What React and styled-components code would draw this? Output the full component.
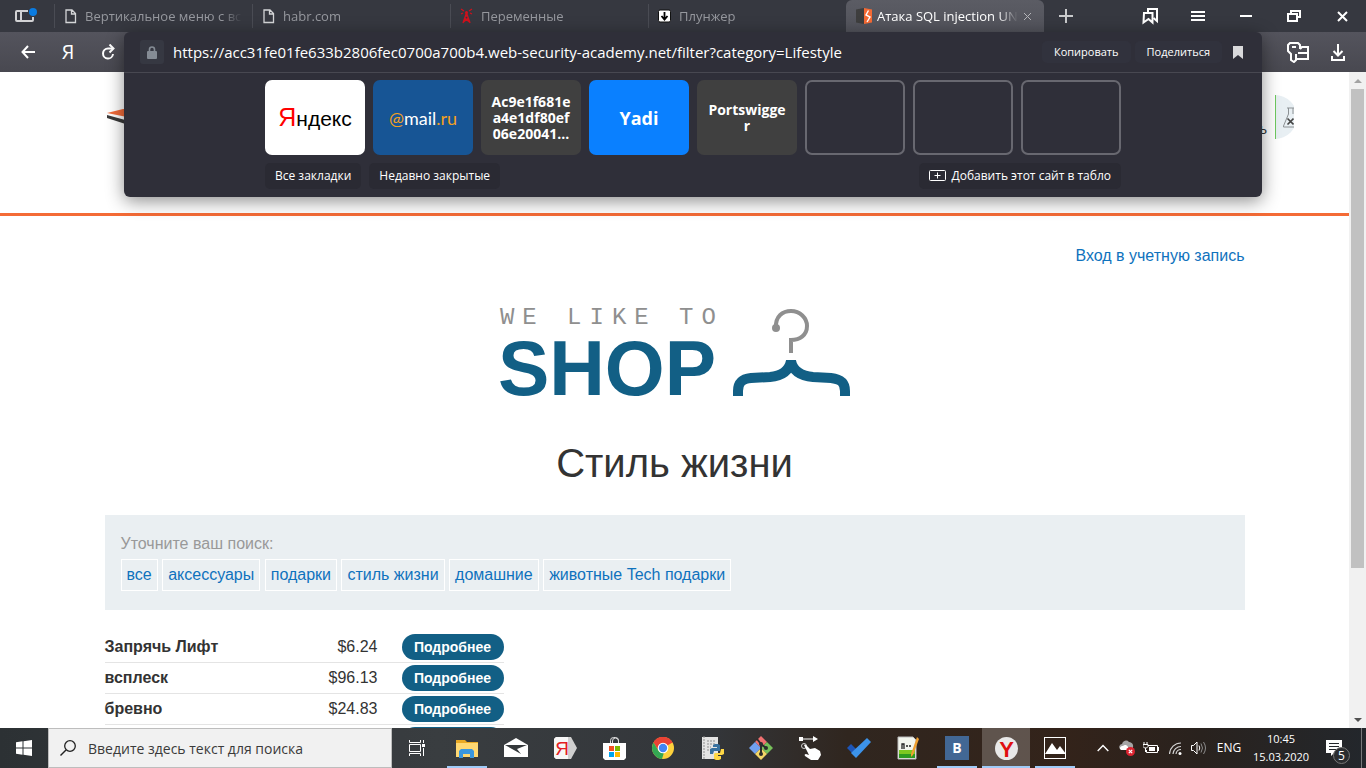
import React, { Fragment } from "react";
import styled, { createGlobalStyle } from "styled-components";

const ui = `"Open Sans", "Noto Sans", sans-serif`;
const site = `"Liberation Sans", Arial, sans-serif`;

const GlobalStyle = createGlobalStyle`
  *, *::before, *::after { box-sizing: border-box; }
  body { margin: 0; background: #fff; }
  button, input { font: inherit; color: inherit; border: 0; background: none; padding: 0; margin: 0; }
  input { outline: none; min-width: 0; }
  svg { display: block; flex: none; }
`;

const Desktop = styled.div`
  display: flex;
  flex-direction: column;
  height: 100vh;
  overflow: hidden;
  font-family: ${ui};
`;

const Browser = styled.div`
  position: relative;
  flex: 1;
  min-height: 0;
  display: flex;
  flex-direction: column;
`;

/* ---------- tab strip ---------- */

const TabStrip = styled.div`
  display: flex;
  height: 32px;
  flex: none;
  background: #363840;
  color: #fff;
`;

const PanelToggle = styled.button`
  width: 54px;
  padding: 0 0 0 15px;
`;

const Tab = styled.button`
  display: flex;
  align-items: center;
  gap: ${(p) => (p.$active ? 5 : 8)}px;
  width: 198px;
  height: 32px;
  padding: 0 ${(p) => (p.$active ? 12 : 10)}px 0 10px;
  text-align: left;
  font-size: 13px;
  line-height: 20px;
  color: ${(p) => (p.$active ? "#fff" : "#96989e")};
  background: ${(p) =>
    p.$active
      ? "linear-gradient(#5b5c64, #52535b)"
      : "linear-gradient(#4a4c54, #4a4c54) 0 4px / 1px 24px no-repeat"};
  border-radius: ${(p) => (p.$active ? "6px 6px 0 0" : "0")};
`;

const TabTitle = styled.span`
  flex: 1;
  min-width: 0;
  overflow: hidden;
  white-space: nowrap;
  mask-image: linear-gradient(to right, #000 calc(100% - 20px), transparent);
`;

const WindowButtons = styled.div`
  display: flex;
  margin-left: auto;
`;

const IconButton = styled.button`
  display: flex;
  align-items: center;
  justify-content: center;
  width: ${(p) => p.$width || 48}px;
  height: 100%;
  color: #fff;
`;

/* ---------- toolbar ---------- */

const Toolbar = styled.div`
  display: flex;
  justify-content: space-between;
  height: 40px;
  flex: none;
  padding: 0 8px;
  background: linear-gradient(#54545d, #484850);
`;

const ToolGroup = styled.div`
  display: flex;
`;

const YaLetter = styled.span`
  font: 20px/24px ${ui};
`;

/* ---------- address panel ---------- */

const AddressPanel = styled.section`
  position: absolute;
  z-index: 2;
  top: 32px;
  left: 124px;
  right: 104px;
  background: #2f2f39;
  border-radius: 6px;
  box-shadow: 0 4px 18px rgba(0, 0, 0, 0.45);
  color: #fff;
`;

const AddressRow = styled.div`
  display: flex;
  align-items: center;
  height: 41px;
  padding: 0 12px 0 16px;
  border-bottom: 1px solid #484851;
`;

const LockButton = styled.button`
  display: flex;
  align-items: center;
  justify-content: center;
  width: 24px;
  height: 24px;
  border-radius: 3px;
  background: #363842;
`;

const AddressInput = styled.input`
  flex: 1;
  padding: 0 9px;
  font-size: 15px;
  line-height: 24px;
`;

const TextButton = styled.button`
  display: flex;
  align-items: center;
  justify-content: center;
  gap: 5px;
  height: ${(p) => (p.$small ? 22 : 26)}px;
  padding: 0 ${(p) => (p.$small ? 12 : 10)}px;
  margin-right: ${(p) => (p.$small ? 4 : 0)}px;
  border-radius: 5px;
  background: ${(p) => (p.$small ? "#31323d" : "#2a2a33")};
  font-size: ${(p) => (p.$small ? 11 : 12)}px;
  line-height: 20px;
  white-space: nowrap;
`;

const Board = styled.div`
  display: flex;
  flex-direction: column;
  gap: 8px;
  width: 856px;
  max-width: 100%;
  margin: 0 auto;
  padding: 7px 0 8px;
`;

const Tiles = styled.div`
  display: grid;
  grid-template-columns: repeat(8, minmax(0, 1fr));
  gap: 8px;
`;

const Tile = styled.button`
  height: 75px;
  padding: 0 10px;
  border-radius: 7px;
  background: ${(p) => p.$bg || "transparent"};
  border: ${(p) => (p.$bg ? "0" : "2px solid #686870")};
  font-size: ${(p) => p.$size || 14}px;
  font-weight: 700;
  line-height: 16px;
  word-break: break-all;
`;

const YandexMark = styled.span`
  font: 21px/32px ${site};
  color: #000;
  white-space: nowrap;
  b {
    font-weight: 400;
    font-size: 25px;
    color: #f00;
  }
`;

const MailMark = styled.span`
  font: 18px/24px Lato, sans-serif;
  color: #fff;
  white-space: nowrap;
  i {
    font-style: normal;
    color: #f2a01f;
  }
`;

const BoardActions = styled.div`
  display: flex;
  gap: 8px;
`;

const Spacer = styled.div`
  flex: 1;
`;

/* ---------- web page ---------- */

const Viewport = styled.div`
  display: flex;
  flex: 1;
  min-height: 0;
`;

const Page = styled.div`
  flex: 1;
  min-width: 0;
  overflow: hidden;
  background: #fff;
  color: #333;
  font: 16px/20px ${site};
`;

const SiteHeader = styled.header`
  height: 144px;
  border-bottom: 3px solid #f46b36;
`;

const HeaderInner = styled.div`
  display: flex;
  align-items: flex-start;
  justify-content: space-between;
  padding: 23px 55px 0 107px;
`;

const SiteLogo = styled.a`
  padding-top: 14px;
`;

const LabStatus = styled.div`
  display: flex;
  align-items: flex-start;
  gap: 8px;
  p {
    margin: 24px 0 0;
    font-size: 14px;
  }
`;

const Container = styled.main`
  max-width: 1140px;
  margin: 0 auto;
  padding-top: 30px;
`;

const Link = styled.a`
  color: #0f72bd;
  text-decoration: none;
`;

const AccountNav = styled.nav`
  text-align: right;
`;

const ShopLogo = styled.div`
  display: flex;
  justify-content: center;
  gap: 16px;
  height: 92px;
  margin-top: 40px;
`;

const ShopSlogan = styled.div`
  width: 216px;
  padding-left: 2px;
  font: 24px/24px "Liberation Mono", monospace;
  letter-spacing: 8px;
  color: #8f8f8f;
  white-space: pre;
`;

const ShopName = styled.div`
  font: 700 77px/76px ${site};
  color: #125f85;
`;

const Title = styled.h1`
  margin: 41px 0 28px;
  font-size: 40px;
  line-height: 48px;
  font-weight: 400;
  text-align: center;
`;

const Filters = styled.section`
  padding: 16px 16px 19px;
  background: #eaeff2;
  p {
    margin: 0 0 2px;
    line-height: 26px;
    color: #999;
  }
`;

const Chips = styled.div`
  line-height: 20px;
`;

const Chip = styled(Link)`
  display: inline-block;
  vertical-align: top;
  padding: 5px;
  border: 1px solid #fff;
`;

const Products = styled.table`
  width: 399px;
  margin-top: 22px;
  border-collapse: separate;
  border-spacing: 0;
  th,
  td {
    height: 31px;
    padding: 2px 0;
    border-bottom: 1px solid #e4e4e4;
    vertical-align: middle;
  }
  th {
    text-align: left;
  }
`;

const Price = styled.td`
  width: 90px;
  text-align: right;
`;

const Action = styled.td`
  width: 126px;
  text-align: right;
`;

const DetailsButton = styled.button`
  display: block;
  width: 102px;
  height: 26px;
  margin-left: auto;
  border-radius: 13px;
  background: #125f85;
  color: #fff;
  font-size: 14px;
  font-weight: 700;
`;

const Scrollbar = styled.div`
  display: flex;
  flex-direction: column;
  align-items: center;
  width: 17px;
  background: #f1f1f1;
`;

const ScrollArrow = styled.button`
  display: flex;
  align-items: center;
  justify-content: center;
  width: 17px;
  height: 17px;
`;

const ScrollTrack = styled.div`
  flex: 1;
  width: 13px;
`;

const ScrollThumb = styled.div`
  height: 77%;
  background: #c1c1c1;
`;

/* ---------- taskbar ---------- */

const Taskbar = styled.footer`
  display: flex;
  height: 40px;
  flex: none;
  color: #fff;
  background: linear-gradient(
    to right,
    #2c3134 0,
    #393d40 32%,
    #33363a 52%,
    #30261f 62%,
    #33231a 78%,
    #29221e 88%,
    #23272c 100%
  );
`;

const SearchBox = styled.label`
  display: flex;
  align-items: center;
  gap: 12px;
  width: 344px;
  padding: 0 11px;
  border: 1px solid #bdbdbd;
  background: #f1f1f1;
  color: #222;
  font-size: 14px;
  input {
    flex: 1;
  }
  input::placeholder {
    color: #3a3a3a;
    opacity: 1;
  }
`;

const Apps = styled.div`
  display: flex;
  gap: 1px;
`;

const AppButton = styled.button`
  display: flex;
  align-items: center;
  justify-content: center;
  width: 48px;
  height: 40px;
  background: ${(p) => (p.$active ? "rgba(255,255,255,0.22)" : "transparent")};
  background-image: ${(p) => (p.$open ? "linear-gradient(#9fcbf8, #9fcbf8)" : "none")};
  background-size: ${(p) => (p.$active ? 48 : 40)}px 2px;
  background-position: center bottom;
  background-repeat: no-repeat;
`;

const Tray = styled.div`
  display: flex;
  margin-left: auto;
  padding-right: 4px;
  font-size: 12px;
  line-height: 18px;
`;

const Clock = styled.button`
  width: 68px;
  text-align: center;
  font-size: 11px;
  white-space: nowrap;
`;

const Notifications = styled(IconButton)`
  padding-top: 8px;
  border-right: 1px solid #77797b;
`;

/* ---------- icons ---------- */

const Svg = ({ w = 16, h = w, children, ...rest }) => (
  <svg width={w} height={h} viewBox={`0 0 ${w} ${h}`} fill="none" aria-hidden="true" {...rest}>
    {children}
  </svg>
);

const line = { stroke: "currentColor", strokeWidth: 2 };

const PanelIcon = () => (
  <Svg w={22} h={16}>
    <path d="M13 3H2q-1 0-1 1v8q0 1 1 1h15q1 0 1-1V9M6 3v10" stroke="#d2d2d4" strokeWidth="2" />
    <circle cx="18" cy="4" r="4" fill="#0a7be0" />
  </Svg>
);
const DocIcon = () => (
  <Svg w={13} h={16}>
    <path d="M2 2h6l3.500 3.500V14.500H2zM7.500 2v4h4" stroke="#d4d5d7" strokeWidth="1.300" />
  </Svg>
);
const TowerIcon = () => (
  <Svg w={13} h={16}>
    <path d="M6.500 5L3 15M6.500 5L10 15M4.500 10L9.500 14M8.500 10L3.500 14M5 8h3" stroke="#d0111c" strokeWidth="1.400" />
    <path d="M1 1l3 2M1 6l2-1M12 1L9 3M12 6l-2-1" stroke="#d0111c" strokeWidth="1.200" />
    <circle cx="6.500" cy="4.500" r="1.500" fill="#d0111c" />
  </Svg>
);
const PlungerIcon = () => (
  <Svg w={13} h={16}>
    <rect x="0.500" y="2" width="12" height="12" rx="1.500" fill="#fff" stroke="#111" />
    <path d="M6.500 4v7M3.500 8l3 3.500 3-3.500" stroke="#000" strokeWidth="1.800" />
  </Svg>
);
const BurpIcon = () => (
  <Svg w={16} h={16}>
    <path d="M0 1.500L8 0v16L0 14.500z" fill="#3e3e3e" />
    <path d="M8 0l8 1.500v13L8 16z" fill="#f56a34" />
    <path d="M12.500 2.500L10 7l4 2-3 5" stroke="#fff" strokeWidth="1.400" />
  </Svg>
);
const CloseIcon = ({ size = 10, color = "#fff", weight = 2 }) => (
  <Svg w={size}>
    <path d={`M1 1L${size - 1} ${size - 1}M${size - 1} 1L1 ${size - 1}`} stroke={color} strokeWidth={weight} />
  </Svg>
);
const PlusIcon = () => (
  <Svg w={14}>
    <path d="M7 0v14M0 7h14" stroke="#c9cacc" strokeWidth="2" />
  </Svg>
);
const BookmarksIcon = () => (
  <Svg w={16} h={18}>
    <path d="M6 5V2h9v12l-3.500-3" {...line} />
    <path d="M2 6h8.500v9.500L6.500 12 1.500 15.500z" {...line} />
  </Svg>
);
const MenuIcon = () => (
  <Svg w={14} h={12}>
    <path d="M0 2h14M0 6h14M0 10h14" {...line} />
  </Svg>
);
const MinimizeIcon = () => (
  <Svg w={12} h={12}>
    <path d="M0 6h12" {...line} />
  </Svg>
);
const RestoreIcon = () => (
  <Svg w={14} h={12}>
    <path d="M4 4V1h9v6h-3M1 4h9v7H1z" {...line} />
  </Svg>
);
const BackIcon = () => (
  <Svg w={14} h={14}>
    <path d="M14 7H1.500M7 1L1.500 7 7 13" {...line} />
  </Svg>
);
const ReloadIcon = () => (
  <Svg w={14} h={16}>
    <path d="M12 10a5 5 0 1 1-5-5.500h5" {...line} />
    <path d="M8.500 0.500l4 4-4 4" {...line} />
  </Svg>
);
const KeyIcon = () => (
  <Svg w={22} h={22}>
    <path d="M13 8V4L11 2H3L1 4v6l3 3v6l3 2 2-2v-6" {...line} />
    <path d="M5 6h4" {...line} />
    <path d="M13 8l2-2h6v12H9M11 12h10" {...line} />
  </Svg>
);
const DownloadIcon = () => (
  <Svg w={14} h={17}>
    <path d="M7 0v11M2.500 7L7 11.500 11.500 7M1 12v4h12v-4" {...line} />
  </Svg>
);
const LockIcon = () => (
  <Svg w={10} h={13}>
    <rect y="5" width="10" height="8" rx="1" fill="#858c95" />
    <path d="M2.500 5V3.500a2.500 2.500 0 0 1 5 0V5" stroke="#858c95" strokeWidth="1.600" />
  </Svg>
);
const FlagIcon = () => (
  <Svg w={10} h={13}>
    <path d="M0 0h10v13L5 9l-5 4z" fill="#d9d9db" />
  </Svg>
);
const AddTileIcon = () => (
  <Svg w={17} h={12}>
    <rect x="0.500" y="0.500" width="16" height="10" rx="1" stroke="#fff" />
    <path d="M8.500 2.500v6M5.500 5.500h6" stroke="#fff" />
  </Svg>
);

const AcademyLogo = () => (
  <Svg w={40} h={20}>
    <path d="M0 4L40-6v18z" fill="#f26b3a" />
    <path d="M0 6l40 11v5L0 9z" fill="#3a3a3a" />
  </Svg>
);
const LabBadge = () => (
  <Svg w={19} h={44}>
    <path d="M0 0a22 22 0 0 1 0 44z" fill="#e8eff3" />
    <path d="M0.500 0v44" stroke="#6fca5f" />
    <path d="M12 13h7M13.500 13v6L8.500 31v1H19M18 13v6" stroke="#8c9194" />
    <path d="M12.500 23.500l6 6M18.500 23.500l-6 6" stroke="#444" strokeWidth="1.600" />
  </Svg>
);
const Hanger = () => (
  <Svg w={119} h={92}>
    <circle cx="44" cy="22" r="4" fill="#8f8f8f" />
    <path d="M44 22C43 10 51 5 59 5C68 5 75 12 75 20C75 29 68 34 59 34V47" stroke="#8f8f8f" strokeWidth="4" />
    <path d="M6 90V85C6 76 10 73 19 72L38 71C50 70 57 65 59 55C61 65 69 70 81 71L99 72C108 73 113 76 113 85V90" stroke="#125f85" strokeWidth="10" strokeLinejoin="bevel" />
  </Svg>
);
const ArrowGlyph = ({ up }) => (
  <Svg w={8} h={4}>
    <path d={up ? "M0 4l4-4 4 4z" : "M0 0l4 4 4-4z"} fill={up ? "#a3a3a3" : "#505050"} />
  </Svg>
);

const WindowsIcon = () => (
  <Svg w={16}>
    <path d="M0 2.200L6.500 1.300v6.200H0zM7.500 1.200L16 0v7.500H7.500zM0 8.500h6.500v6.200L0 13.800zM7.500 8.500H16V16l-8.500-1.200z" fill="#fff" />
  </Svg>
);
const SearchIcon = () => (
  <Svg w={16}>
    <circle cx="10" cy="6" r="5.300" stroke="#222" strokeWidth="1.300" />
    <path d="M6 10L0.500 15.500" stroke="#222" strokeWidth="1.400" />
  </Svg>
);
const TaskViewIcon = () => (
  <Svg w={17} h={16}>
    <path d="M.5 0v2.500h11V0M.5 4.500h11v7H.5zM.5 16v-2.500h11V16M14.500 0v3M14.500 8v8" stroke="#fff" />
    <rect x="13" y="4" width="3" height="3" fill="#fff" />
  </Svg>
);
const FolderIcon = () => (
  <Svg w={22} h={19}>
    <path d="M0 1h9l2 2h11v15H0z" fill="#e9a924" />
    <path d="M0 4h22v14H0z" fill="#ffd872" />
    <path d="M3 19v-7l2-2h11l2 2v7h-4v-4H7v4z" fill="#3a96dd" />
  </Svg>
);
const MailIcon = () => (
  <Svg w={24} h={20}>
    <path d="M0 7L12 0l12 7v12H0z" fill="#fff" />
    <path d="M1 7h22l-10 4 4 5z" fill="#34383b" />
  </Svg>
);
const YaIcon = () => (
  <Svg w={23} h={22}>
    <path d="M2 0h15l6 11-6 11H2L0 20V2z" fill="#cfcfcf" />
    <path d="M2 0h12v22H2L0 20V2z" fill="#f7f7f7" />
    <text x="8" y="18" fill="#e31e24" fontSize="19" textAnchor="middle" fontFamily="Liberation Sans, sans-serif">Я</text>
  </Svg>
);
const StoreIcon = () => (
  <Svg w={23} h={23}>
    <path d="M7.500 6V3.500a3 3 0 0 1 3-3h2a3 3 0 0 1 3 3V6M9.500 6V4a3 3 0 0 1 6 0" stroke="#ddd" />
    <path d="M0 6h23v15l-2 2H2l-2-2z" fill="#fff" />
    <path d="M6 9h5v5H6z" fill="#f25022" />
    <path d="M12 9h5v5h-5z" fill="#7fba00" />
    <path d="M6 15h5v5H6z" fill="#00a4ef" />
    <path d="M12 15h5v5h-5z" fill="#ffb900" />
  </Svg>
);
const ChromeIcon = () => (
  <Svg w={22}>
    <circle cx="11" cy="11" r="11" fill="#fdd13c" />
    <path d="M11 11L1.500 5.500A11 11 0 0 1 20.500 5.500z" fill="#ea4335" />
    <path d="M11 6h9.800a11 11 0 0 0-19.300-.5L6 13z" fill="#ea4335" />
    <path d="M1.500 5.500L6.700 14l5 2.500L10 22A11 11 0 0 1 1.500 5.500z" fill="#34a853" />
    <circle cx="11" cy="11" r="5.300" fill="#fff" />
    <circle cx="11" cy="11" r="4.200" fill="#4285f4" />
  </Svg>
);
const PythonIcon = () => (
  <Svg w={23} h={24}>
    <path d="M1 1h16v22H1z" fill="#e4e4e4" />
    <path d="M3 0v24M6 5h9M6 8h9M6 11h4M6 14h3" stroke="#8d8d8d" strokeDasharray="2 1" />
    <path d="M9 16v-3l2-1h5v-1h-4V9l2-1h3l2 1v6h-6l-1 3H9z" fill="#38719f" />
    <path d="M23 13v5l-2 1h-4v1h3v3l-2 1h-3l-2-1v-5l1-1h5l1-4z" fill="#ffd845" />
  </Svg>
);
const GitIcon = () => (
  <Svg w={24}>
    <path d="M12 0l6 6-6 6-6-6z" fill="#f07070" />
    <path d="M6 6l6 6-6 6-6-6z" fill="#70a0ef" />
    <path d="M18 6l6 6-6 6-6-6z" fill="#77c05a" />
    <path d="M12 12l6 6-6 6-6-6z" fill="#f3d667" />
    <path d="M8 3l4 5v10M12 8l5 4" stroke="#2c2c2c" strokeWidth="2" />
    <circle cx="12" cy="18" r="2" fill="#2c2c2c" />
    <circle cx="12" cy="8" r="2" fill="#2c2c2c" />
    <circle cx="17" cy="12" r="2" fill="#2c2c2c" />
  </Svg>
);
const HandIcon = () => (
  <Svg w={24}>
    <path d="M1 1h4v4H1zM15 0l5 3-5 3z" fill="#fff" />
    <path d="M5 3h11" stroke="#fff" />
    <circle cx="6" cy="10" r="2.500" stroke="#ccc" />
    <path d="M6 9q1-1 2 0l4 4 5-1 5 3 1 4-3 5h-7l-6-4q-1-2 1-2l3 1z" fill="#fff" />
  </Svg>
);
const CheckIcon = () => (
  <Svg w={24} h={20}>
    <path d="M0 10l4-4 6 6-4 4z" fill="#1d55b8" />
    <path d="M20 0l4 4L9 20l-5-5z" fill="#3c93ea" />
  </Svg>
);
const NotepadIcon = () => (
  <Svg w={22} h={24}>
    <path d="M1 1h15l3 3v19H1z" fill="#f3f6ee" stroke="#bbb" />
    <path d="M2 14h16v8H2z" fill="#7ec820" />
    <path d="M2 18h16v4H2z" fill="#2e9a20" />
    <path d="M5 13V8h2v5M9 10h2M12 10h2" stroke="#222" strokeWidth="1.300" />
    <path d="M20 1l2 2-6 16-2 2v-3z" fill="#f0a030" />
  </Svg>
);
const VkIcon = () => (
  <Svg w={24}>
    <rect width="24" height="24" fill="#426794" />
    <text x="12" y="17" fill="#fff" fontSize="14" fontWeight="700" textAnchor="middle" fontFamily="Open Sans, sans-serif">B</text>
  </Svg>
);
const YBrowserIcon = () => (
  <Svg w={23}>
    <circle cx="11.500" cy="11.500" r="11.500" fill="#e9e9e9" />
    <text x="11.500" y="20" fill="#e01010" fontSize="22" fontWeight="700" textAnchor="middle" fontFamily="Liberation Sans, sans-serif">Y</text>
  </Svg>
);
const PhotosIcon = () => (
  <Svg w={22}>
    <rect x="0.500" y="0.500" width="21" height="21" stroke="#fff" />
    <path d="M1 17l7-11 5 7 3-4 6 8H1z" fill="#fff" />
  </Svg>
);

const ChevronIcon = () => (
  <Svg w={12} h={8}>
    <path d="M.7 7L6 1.500 11.300 7" stroke="#fff" strokeWidth="1.400" />
  </Svg>
);
const CloudIcon = () => (
  <Svg w={16}>
    <path d="M1 9a3 3 0 0 1 2-5 4 4 0 0 1 7-2 4 4 0 0 1 4 5v2z" fill="#a5a5a5" />
    <path d="M1 9a2.500 2.500 0 0 1 3-3 3 3 0 0 1 5 1v3H2z" fill="#fff" />
    <circle cx="11.500" cy="11.500" r="4.500" fill="#dc2430" />
    <path d="M9.800 9.800l3.400 3.400M13.200 9.800l-3.400 3.400" stroke="#fff" strokeWidth="1.200" />
  </Svg>
);
const BatteryIcon = () => (
  <Svg w={16} h={12}>
    <path d="M5 3.500h9.500v7h-11V8" stroke="#fff" />
    <path d="M6 5h6v4H6zM15 5h1v4h-1z" fill="#fff" />
    <path d="M1 0v2M4 0v2M0 2.500h5v2L3.500 6h-2L0 4.500zM2.500 6v4" stroke="#fff" />
  </Svg>
);
const WifiIcon = () => (
  <Svg w={13}>
    <path d="M.5 12A11.500 11.500 0 0 1 12 1M4 12a8 8 0 0 1 8-7.500M7 12a5 5 0 0 1 5-4.500" stroke="#d4d4d4" strokeWidth="1.200" />
    <circle cx="11" cy="11.500" r="1.500" fill="#fff" />
  </Svg>
);
const SpeakerIcon = () => (
  <Svg w={16} h={14}>
    <path d="M.5 4.500h2L6 1v12L2.500 9.500h-2z" stroke="#fff" />
    <path d="M8 4.500q1.500 2.500 0 5" stroke="#fff" />
    <path d="M10 2.500q3 4.500 0 9M12.500 1q4 6 0 12" stroke="#8c8c8c" />
  </Svg>
);
const NoticeIcon = () => (
  <Svg w={24} h={24}>
    <path d="M0 0h16v13H8l-3 3v-3H0z" fill="#fff" />
    <path d="M3 3.500h10M3 6.500h10M3 9.500h7" stroke="#24282c" />
    <circle cx="15.500" cy="15.500" r="8" fill="#2b2d30" stroke="#777" />
    <text x="15.500" y="20" fill="#fff" fontSize="12" textAnchor="middle" fontFamily="Open Sans, sans-serif">5</text>
  </Svg>
);

/* ---------- data ---------- */

const tabs = [
  { title: "Вертикальное меню с всплывающими", Icon: DocIcon },
  { title: "habr.com", Icon: DocIcon },
  { title: "Переменные", Icon: TowerIcon },
  { title: "Плунжер", Icon: PlungerIcon },
];

const categories = ["все", "аксессуары", "подарки", "стиль жизни", "домашние", "животные Tech подарки"];

const products = [
  { name: "Запрячь Лифт", price: "$6.24" },
  { name: "всплеск", price: "$96.13" },
  { name: "бревно", price: "$24.83" },
  { name: "", price: "" },
];

const apps = [
  { label: "Проводник", Icon: FolderIcon, open: true },
  { label: "Почта", Icon: MailIcon },
  { label: "Яндекс", Icon: YaIcon },
  { label: "Магазин", Icon: StoreIcon },
  { label: "Chrome", Icon: ChromeIcon },
  { label: "Python", Icon: PythonIcon },
  { label: "Git", Icon: GitIcon },
  { label: "Жесты", Icon: HandIcon },
  { label: "Задачи", Icon: CheckIcon },
  { label: "Notepad++", Icon: NotepadIcon },
  { label: "ВКонтакте", Icon: VkIcon, open: true },
  { label: "Яндекс.Браузер", Icon: YBrowserIcon, open: true, active: true },
  { label: "Фотографии", Icon: PhotosIcon, open: true },
];

const trayItems = [
  { label: "Скрытые значки", Icon: ChevronIcon },
  { label: "Облако", Icon: CloudIcon },
  { label: "Батарея", Icon: BatteryIcon },
  { label: "Сеть", Icon: WifiIcon },
  { label: "Громкость", Icon: SpeakerIcon },
];

/* ---------- sections ---------- */

const Tabs = () => (
  <TabStrip>
    <PanelToggle aria-label="Панель"><PanelIcon /></PanelToggle>
    {tabs.map(({ title, Icon }) => (
      <Tab key={title}>
        <Icon />
        <TabTitle>{title}</TabTitle>
      </Tab>
    ))}
    <Tab $active>
      <BurpIcon />
      <TabTitle>Атака SQL injection UNION</TabTitle>
      <CloseIcon size={9} color="#b4b5b9" weight={1} />
    </Tab>
    <IconButton $width={44} aria-label="Новая вкладка"><PlusIcon /></IconButton>
    <WindowButtons>
      <IconButton aria-label="Закладки"><BookmarksIcon /></IconButton>
      <IconButton aria-label="Меню"><MenuIcon /></IconButton>
      <IconButton aria-label="Свернуть"><MinimizeIcon /></IconButton>
      <IconButton aria-label="Окно"><RestoreIcon /></IconButton>
      <IconButton aria-label="Закрыть"><CloseIcon size={11} /></IconButton>
    </WindowButtons>
  </TabStrip>
);

const Address = () => (
  <AddressPanel>
    <AddressRow>
      <LockButton aria-label="Защита"><LockIcon /></LockButton>
      <AddressInput
        aria-label="Адрес"
        defaultValue="https://acc31fe01fe633b2806fec0700a700b4.web-security-academy.net/filter?category=Lifestyle"
      />
      <TextButton $small>Копировать</TextButton>
      <TextButton $small>Поделиться</TextButton>
      <IconButton $width={24} aria-label="В закладки"><FlagIcon /></IconButton>
    </AddressRow>
    <Board>
      <Tiles>
        <Tile $bg="#fff"><YandexMark><b>Я</b>ндекс</YandexMark></Tile>
        <Tile $bg="#175595"><MailMark><i>@</i>mail<i>.ru</i></MailMark></Tile>
        <Tile $bg="#404040">Ac9e1f681ea4e1df80ef06e20041...</Tile>
        <Tile $bg="#0a80ff" $size={18}>Yadi</Tile>
        <Tile $bg="#404040">Portswigger</Tile>
        <Tile aria-label="Пустая ячейка" />
        <Tile aria-label="Пустая ячейка" />
        <Tile aria-label="Пустая ячейка" />
      </Tiles>
      <BoardActions>
        <TextButton>Все закладки</TextButton>
        <TextButton>Недавно закрытые</TextButton>
        <Spacer />
        <TextButton><AddTileIcon />Добавить этот сайт в табло</TextButton>
      </BoardActions>
    </Board>
  </AddressPanel>
);

const ShopPage = () => (
  <Page>
    <SiteHeader>
      <HeaderInner>
        <SiteLogo href="#" aria-label="Web Security Academy"><AcademyLogo /></SiteLogo>
        <LabStatus>
          <p>ь</p>
          <LabBadge />
        </LabStatus>
      </HeaderInner>
    </SiteHeader>
    <Container>
      <AccountNav><Link href="#">Вход в учетную запись</Link></AccountNav>
      <ShopLogo>
        <div>
          <ShopSlogan>WE LIKE TO</ShopSlogan>
          <ShopName>SHOP</ShopName>
        </div>
        <Hanger />
      </ShopLogo>
      <Title>Стиль жизни</Title>
      <Filters>
        <p>Уточните ваш поиск:</p>
        <Chips>
          {categories.map((c) => (
            <Fragment key={c}>
              <Chip href="#">{c}</Chip>{" "}
            </Fragment>
          ))}
        </Chips>
      </Filters>
      <Products>
        <tbody>
          {products.map(({ name, price }) => (
            <tr key={name}>
              <th scope="row">{name}</th>
              <Price>{price}</Price>
              <Action><DetailsButton>Подробнее</DetailsButton></Action>
            </tr>
          ))}
        </tbody>
      </Products>
    </Container>
  </Page>
);

export default function App() {
  return (
    <Desktop>
      <GlobalStyle />
      <Browser>
        <Tabs />
        <Toolbar>
          <ToolGroup>
            <IconButton $width={40} aria-label="Назад"><BackIcon /></IconButton>
            <IconButton $width={40}><YaLetter>Я</YaLetter></IconButton>
            <IconButton $width={40} aria-label="Обновить"><ReloadIcon /></IconButton>
          </ToolGroup>
          <ToolGroup>
            <IconButton $width={40} aria-label="Пароли"><KeyIcon /></IconButton>
            <IconButton $width={40} aria-label="Загрузки"><DownloadIcon /></IconButton>
          </ToolGroup>
        </Toolbar>
        <Address />
        <Viewport>
          <ShopPage />
          <Scrollbar>
            <ScrollArrow aria-label="Вверх"><ArrowGlyph up /></ScrollArrow>
            <ScrollTrack><ScrollThumb /></ScrollTrack>
            <ScrollArrow aria-label="Вниз"><ArrowGlyph /></ScrollArrow>
          </Scrollbar>
        </Viewport>
      </Browser>
      <Taskbar>
        <IconButton aria-label="Пуск"><WindowsIcon /></IconButton>
        <SearchBox>
          <SearchIcon />
          <input type="text" aria-label="Поиск" placeholder="Введите здесь текст для поиска" />
        </SearchBox>
        <Apps>
          <IconButton $width={50} aria-label="Представление задач"><TaskViewIcon /></IconButton>
          {apps.map(({ label, Icon, open, active }) => (
            <AppButton key={label} aria-label={label} $open={open} $active={active}><Icon /></AppButton>
          ))}
        </Apps>
        <Tray>
          {trayItems.map(({ label, Icon }) => (
            <IconButton key={label} $width={24} aria-label={label}><Icon /></IconButton>
          ))}
          <IconButton $width={36}>ENG</IconButton>
          <Clock>10:45<br />15.03.2020</Clock>
          <Notifications $width={47} aria-label="Уведомления"><NoticeIcon /></Notifications>
        </Tray>
      </Taskbar>
    </Desktop>
  );
}
